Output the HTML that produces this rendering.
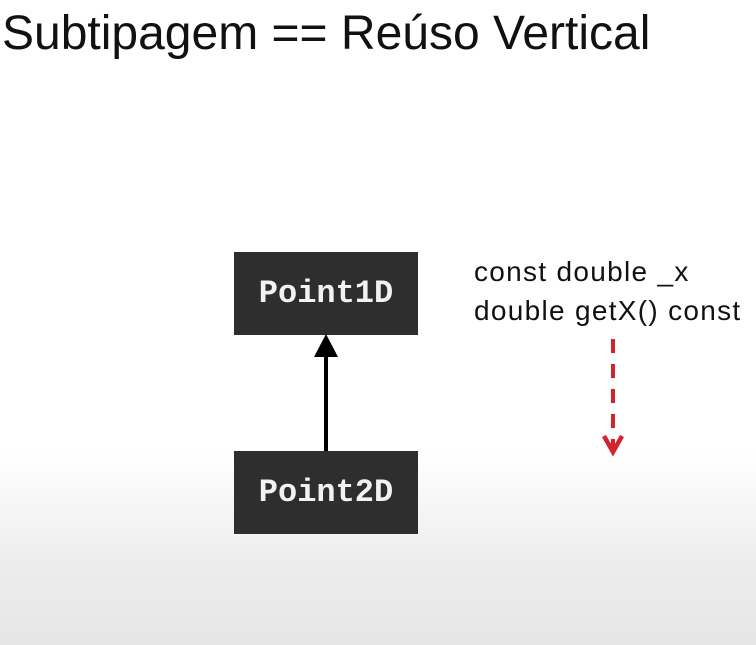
<!DOCTYPE html>
<html><head><style>
body{margin:0;width:756px;height:645px;overflow:hidden;background:linear-gradient(#fff 0,#fff 450px,#ececec 570px,#e6e6e6 645px);font-family:"Liberation Sans",sans-serif;position:relative}
.t{position:absolute;left:2px;top:6px;font-size:48px;color:#111;white-space:nowrap}
.b{position:absolute;left:234px;width:184px;height:83px;background:#2e2e2e;color:#f2f2f2;font-family:"Liberation Mono",monospace;font-weight:bold;font-size:32px;line-height:83px;text-align:center}
.c{position:absolute;left:474px;font-size:28px;color:#111;white-space:nowrap;letter-spacing:1.3px}
</style></head><body>
<div class="t">Subtipagem == Reúso Vertical</div>
<div class="b" style="top:252px">Point1D</div>
<div class="b" style="top:451px">Point2D</div>
<div class="c" style="top:256px">const double _x</div>
<div class="c" style="top:295px">double getX() const</div>
<svg width="756" height="645" style="position:absolute;left:0;top:0">
<line x1="326" y1="350" x2="326" y2="451" stroke="#000" stroke-width="4"/>
<polygon points="326,334 314,357 338,357" fill="#000"/>
<line x1="613" y1="339" x2="613" y2="448" stroke="#d2232e" stroke-width="4" stroke-dasharray="14,11"/>
<polyline points="604,436 613,452 622,436" fill="none" stroke="#d2232e" stroke-width="4.5"/>
</svg>
</body></html>
